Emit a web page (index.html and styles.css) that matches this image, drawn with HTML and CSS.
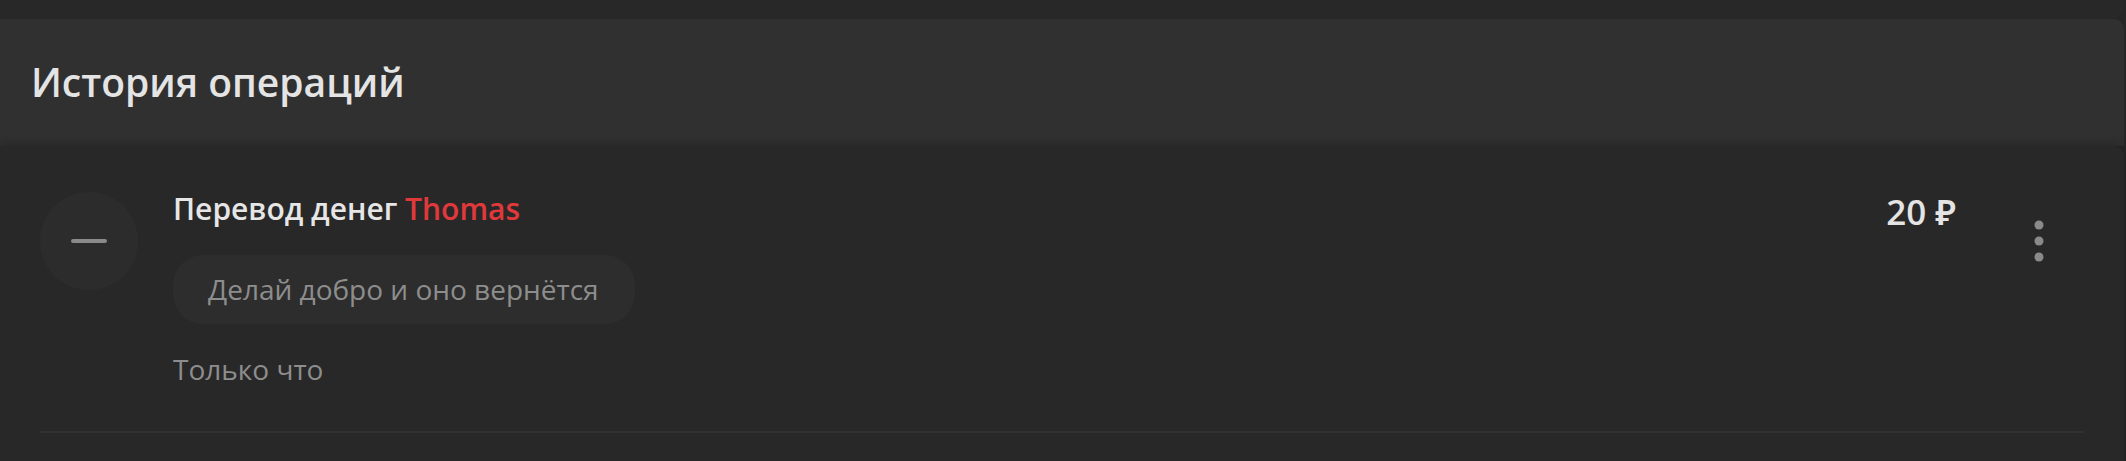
FILE: index.html
```html
<!DOCTYPE html>
<html>

<head>
  <meta name="viewport" content="width=device-width, initial-scale=1">
  <link rel="stylesheet" href="styles.css">
</head>

<body>
  <main class="page">
    <div class="prev-card"></div>

    <section class="history">
      <header class="history__head">
        <h2 class="history__title">История операций</h2>
      </header>

      <div class="history__list">
        <article class="op">
          <div class="op__icon">
            <span class="op__minus"></span>
          </div>

          <div class="op__body">
            <p class="op__title">Перевод денег <span class="op__user">Thomas</span></p>
            <div class="op__comment">Делай добро и оно вернётся</div>
            <p class="op__time">Только что</p>
          </div>

          <div class="op__amount">20 ₽</div>

          <button class="op__more" aria-label="Ещё">
            <svg viewBox="0 0 10 42" width="10" height="42">
              <circle cx="5" cy="5" r="4.5" />
              <circle cx="5" cy="21" r="4.5" />
              <circle cx="5" cy="37" r="4.5" />
            </svg>
          </button>
        </article>
        <hr class="op__divider">
      </div>
    </section>
  </main>
</body>

</html>
```

FILE: styles.css
```css
:root {
  --page-bg: #262626;
  --card-bg: #282828;
  --head-bg: #303030;
  --text-main: #e6e6e6;
  --text-muted: #8d8d8d;
  --accent: #e0393b;
}

html,
body {
  margin: 0;
  height: 100%;
}

body {
  background-color: var(--page-bg);
  font-family: "Open Sans", "Noto Sans", sans-serif;
  color: var(--text-main);
  overflow: hidden;
}

.page {
  padding-right: 2px;
}

.prev-card {
  height: 19px;
  background-color: var(--card-bg);
  border-radius: 0 0 12px 0;
}

.history__head {
  height: 127px;
  display: flex;
  align-items: center;
  padding-left: 31px;
  background-color: var(--head-bg);
  border-radius: 0 10px 0 0;
}

.history__title {
  margin: 0 0 2px;
  font-size: 39px;
  font-weight: 600;
  color: #e4e4e4;
}

.history__list {
  position: relative;
  background-color: var(--card-bg);
  border-radius: 0 10px 0 0;
  box-shadow: 0 -3px 8px rgba(0, 0, 0, 0.18);
  padding: 0 40px 40px 40px;
}

.op {
  display: flex;
  align-items: flex-start;
  padding: 43px 40px 43px 0;
}

.op__icon {
  flex: none;
  width: 98px;
  height: 98px;
  margin-top: 3px;
  border-radius: 50%;
  background-color: #2c2c2c;
  display: flex;
  align-items: center;
  justify-content: center;
}

.op__minus {
  width: 36px;
  height: 4px;
  border-radius: 2px;
  background-color: #8a8a8a;
}

.op__body {
  flex: 1;
  margin-left: 35px;
}

.op__title {
  margin: 0;
  font-size: 30px;
  font-weight: 600;
  line-height: 40px;
}

.op__user {
  color: var(--accent);
}

.op__comment {
  display: inline-block;
  margin-top: 26px;
  padding: 15px 36px 16px 35px;
  border-radius: 30px;
  background-color: #2d2d2d;
  color: var(--text-muted);
  font-size: 28px;
  line-height: 38px;
}

.op__time {
  margin: 26px 0 0;
  color: var(--text-muted);
  font-size: 28px;
  line-height: 38px;
}

.op__amount {
  flex: none;
  margin-top: 3px;
  font-size: 35px;
  font-weight: 600;
  line-height: 40px;
  color: #e4e4e4;
}

.op__more {
  flex: none;
  margin: 31px 0 0 78px;
  padding: 0;
  border: 0;
  background: none;
  line-height: 0;
  fill: #8a8a8a;
}

.op__divider {
  margin: 0;
  border: 0;
  height: 2px;
  background-color: #313131;
}
```
